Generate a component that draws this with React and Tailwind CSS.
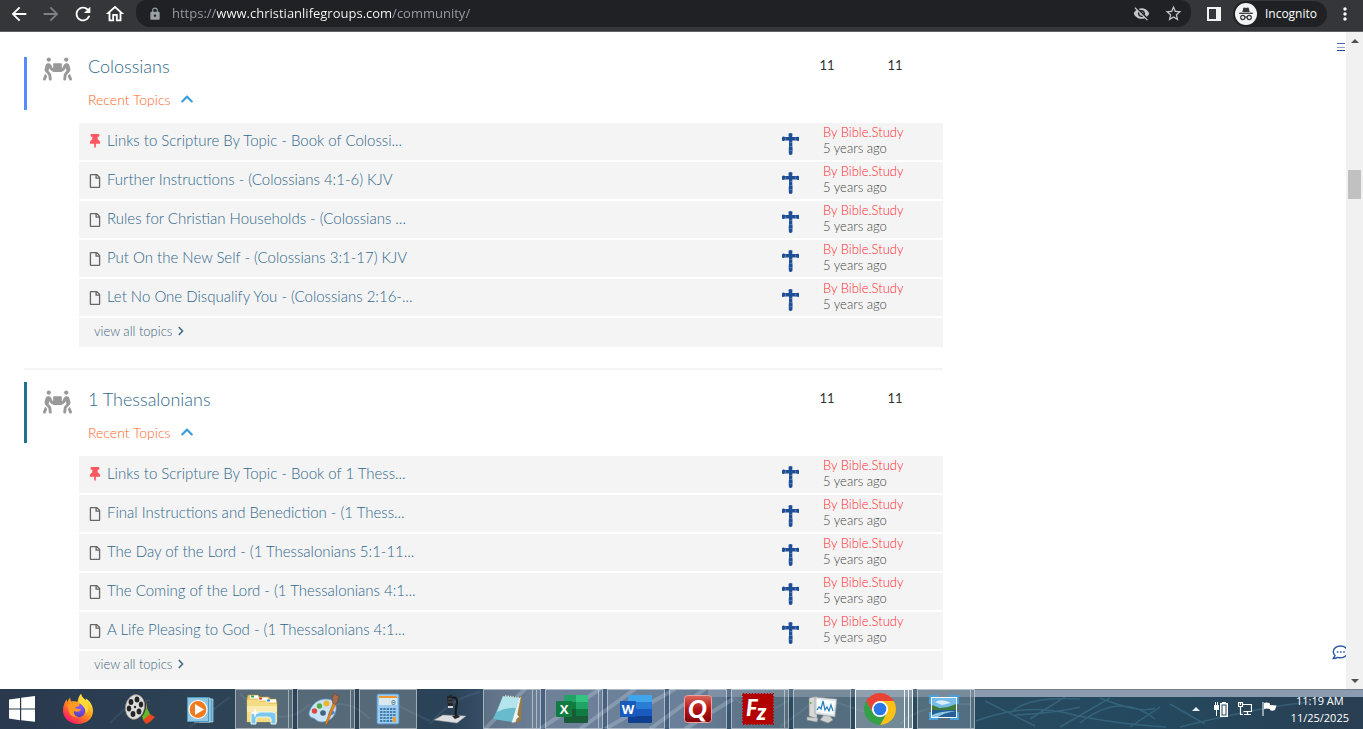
import React from "react";
import {
  FaPeopleCarry,
  FaThumbtack,
  FaRegFile,
  FaChevronUp,
  FaChevronRight,
} from "react-icons/fa";
import {
  MdArrowBack,
  MdArrowForward,
  MdRefresh,
  MdOutlineHome,
  MdLock,
  MdStarOutline,
  MdMoreVert,
  MdVisibilityOff,
} from "react-icons/md";

const forums = [
  {
    name: "Colossians",
    topics: 11,
    posts: 11,
    header: "border-[#548dff]",
    items: [
      "Links to Scripture By Topic - Book of Colossi...",
      "Further Instructions - (Colossians 4:1-6) KJV",
      "Rules for Christian Households - (Colossians ...",
      "Put On the New Self - (Colossians 3:1-17) KJV",
      "Let No One Disqualify You - (Colossians 2:16-...",
    ],
  },
  {
    name: "1 Thessalonians",
    topics: 11,
    posts: 11,
    header: "border-[#1f7291] pt-2",
    items: [
      "Links to Scripture By Topic - Book of 1 Thess...",
      "Final Instructions and Benediction - (1 Thess...",
      "The Day of the Lord - (1 Thessalonians 5:1-11...",
      "The Coming of the Lord - (1 Thessalonians 4:1...",
      "A Life Pleasing to God - (1 Thessalonians 4:1...",
    ],
  },
];

function BrowserBar() {
  return (
    <header className="flex h-8 shrink-0 items-start border-b border-[#606166] bg-[#35363a] px-2 font-['Open_Sans','Noto_Sans',sans-serif] text-white">
      <nav className="flex h-[27px] items-center gap-2.5 text-[22px]">
        <button aria-label="Back"><MdArrowBack /></button>
        <button aria-label="Forward" className="text-[#7f8083]"><MdArrowForward /></button>
        <button aria-label="Reload"><MdRefresh /></button>
        <button aria-label="Home"><MdOutlineHome /></button>
      </nav>
      <div className="ml-2.5 flex h-[27px] min-w-0 flex-1 items-center rounded-b-[14px] rounded-t-[10px] bg-[#202124] pl-3 pr-2">
        <MdLock className="size-3.5 shrink-0 text-[#9aa0a6]" />
        <input
          type="text"
          aria-label="Address"
          defaultValue="https://www.christianlifegroups.com/community/"
          className="ml-2.5 h-6 min-w-0 flex-1 bg-[linear-gradient(90deg,#9aa0a6_45px,#ffffff_45px,#ffffff_220px,#9aa0a6_220px)] bg-clip-text pb-0.5 text-[13px] text-transparent outline-none"
        />
        <button aria-label="Third-party cookies blocked" className="mr-3.5 text-[#c4c6c9]"><MdVisibilityOff className="size-[17px]" /></button>
        <button aria-label="Bookmark this page" className="text-[#c4c6c9]"><MdStarOutline className="size-[19px]" /></button>
      </div>
      <div className="flex h-[27px] items-center">
        <button aria-label="Side panel" className="ml-4">
          <svg viewBox="0 0 14 14" className="size-3.5">
            <path fill="#f1f3f4" fillRule="evenodd" d="M0 0h14v14H0zM2 2v10h7V2z" />
          </svg>
        </button>
        <button className="ml-3 flex h-[26px] items-center gap-2 rounded-full bg-[#202124] pl-0.5 pr-2.5 text-xs text-white">
          <svg viewBox="0 0 22 22" className="size-[22px]">
            <circle cx="11" cy="11" r="11" fill="#f1f3f4" />
            <path fill="#35363a" d="M7.3 9l1-4q.2-.6.8-.5l1.9.5 1.9-.5q.6-.1.8.5l1 4z" />
            <path stroke="#35363a" strokeWidth="1.3" d="M4.2 10.3h13.6" />
            <g fill="none" stroke="#35363a" strokeWidth="1.2">
              <circle cx="7.8" cy="14.5" r="2.1" />
              <circle cx="14.2" cy="14.5" r="2.1" />
              <path d="M9.9 14.2q1.1-.8 2.2 0" />
            </g>
          </svg>
          Incognito
        </button>
        <button aria-label="Menu" className="ml-2"><MdMoreVert className="size-5" /></button>
      </div>
    </header>
  );
}

function Cross() {
  return (
    <svg viewBox="0 0 17 24" className="mt-1 h-6 w-[17px]" aria-hidden="true">
      <path
        fill="#1e4f96"
        d="M6.500 1.800q2-1.600 4 0l-.3 3.200h4.300q2-.8 2.500.2v3.200q-.5 1-2.500.2h-4.200v5l.3 3-.2 5.500q-1.700 1.600-3.500.2l-.2-4.500.3-4V8.600H3q-2 .7-3-.2V5.200q1-1 3-.3h3.700z"
      />
      <path stroke="#7697c4" strokeWidth=".6" d="M3.500 5.500v2.500M13.500 5.500v2.500M7.500 10.500h2.500M7.500 14.500h2.500M7.500 18.500h2.500" />
    </svg>
  );
}

function Forum({ forum }) {
  return (
    <section>
      <div className={"flex items-start border-l-[3px] pl-4 pr-3.5 " + forum.header}>
        <FaPeopleCarry className="h-6 w-[29px] shrink-0 text-[#999999]" />
        <div className="ml-4 flex-1">
          <h2 className="text-lg/[18px] text-[#2f678c]"><a href="#forum">{forum.name}</a></h2>
          <button className="mt-[15px] flex h-5 items-center gap-2.5 pb-px text-sm/[18px] text-[#ff6426]">
            Recent Topics
            <FaChevronUp className="mb-0.5 size-3.5 text-[#3d9fdc]" />
          </button>
        </div>
        <span className="w-[68px] text-center text-[13px]/4 font-normal text-[#333333]">{forum.topics}</span>
        <span className="w-[68px] text-center text-[13px]/4 font-normal text-[#333333]">{forum.posts}</span>
      </div>
      <ul className="ml-[55px] mt-[13px] flex flex-col gap-0.5">
        {forum.items.map((title, i) => (
          <li key={title} className="flex h-[37px] items-center bg-[#f4f4f4] pl-2.5">
            {i === 0 ? (
              <FaThumbtack className="mb-0.5 mr-1.5 h-3.5 w-3 text-[#f9595f]" />
            ) : (
              <FaRegFile className="mr-1.5 h-3.5 w-3 text-[#666666]" />
            )}
            <a href="#topic" className="flex-1 pb-[3px] text-[15px]/5 text-[#2f678c]">{title}</a>
            <Cross />
            <div className="ml-6 w-[120px] pb-[3px] text-[13px]/4 text-[#444444]">
              <a href="#member" className="block text-[#ff2a30]">By Bible.Study</a>
              <span className="block">5 years ago</span>
            </div>
          </li>
        ))}
        <li className="flex h-[29px] items-center bg-[#f4f4f4] pb-[3px] pl-[15px]">
          <a href="#all" className="flex items-center gap-1 text-[13px]/4 text-[#41637a]">
            view all topics
            <FaChevronRight className="size-2.5 text-[#43708c]" />
          </a>
        </li>
      </ul>
    </section>
  );
}

function ScrollBar() {
  return (
    <div className="flex w-[17px] shrink-0 flex-col items-center bg-[#f1f1f1]">
      <button aria-label="Scroll up" className="flex h-[17px] w-full items-center justify-center">
        <svg viewBox="0 0 8 4" className="h-1 w-2"><path fill="#505050" d="M0 4l4-4 4 4z" /></svg>
      </button>
      <div className="flex w-full flex-1 flex-col items-center">
        <div className="basis-[19.5%]" />
        <div className="h-[29px] w-[13px] bg-[#c1c1c1]" />
      </div>
      <button aria-label="Scroll down" className="flex h-[17px] w-full items-center justify-center">
        <svg viewBox="0 0 8 4" className="h-1 w-2"><path fill="#505050" d="M0 0l4 4 4-4z" /></svg>
      </button>
    </div>
  );
}

const icon = "size-8";

function Windows() {
  return (
    <svg viewBox="0 0 26 26" className="size-[26px]">
      <path fill="#fff" d="M0 3.500l11-1.600v10.600H0zM12.200 1.700L26 0v12.500H12.200zM0 13.600h11v10.600L0 22.600zM12.200 13.600H26v12.200l-13.800-1.600z" />
    </svg>
  );
}

function Firefox() {
  return (
    <svg viewBox="0 0 32 32" className={icon}>
      <defs>
        <linearGradient id="ff" x1=".85" y1=".1" x2=".2" y2=".95">
          <stop offset="0" stopColor="#fff44f" />
          <stop offset=".35" stopColor="#ffae1c" />
          <stop offset=".65" stopColor="#ff6a2b" />
          <stop offset="1" stopColor="#f5156c" />
        </linearGradient>
        <radialGradient id="ffp" cx=".6" cy=".3" r=".8">
          <stop offset="0" stopColor="#9059ff" />
          <stop offset="1" stopColor="#4a3cae" />
        </radialGradient>
      </defs>
      <path fill="url(#ff)" d="M19 1c.5 3 3 4.500 4.500 6.500l.3-2C28 8 31 12.500 31 18c0 8-7 13-15 13S1 25.500 1 17.500C1 13 2.500 9 4.800 6.200L5.200 9 8 4.500 9 8.500c3-.8 5 0 6.500.5C16 5.500 17 3 19 1z" />
      <circle cx="16.500" cy="17.500" r="6.800" fill="url(#ffp)" />
      <path fill="#ff9a20" d="M5 12.500C7 9.500 10 8.300 14 9.500c1.500.4 3 1.500 4 2.500-1 1.500-4 1.500-5 3 2.500.6 3.500 1.600 6 1-1.500 3.500-5 3-7 2-.5 3 1.500 5.500 4.500 6-6 1.500-10-3-10-8z" />
      <path fill="#ffd83a" d="M19 1c.5 3 3 4.500 4.500 6.500 3.500 4 4 9 .5 13 0-6-4-8-6.500-11C16.500 6.500 17 3.500 19 1z" />
    </svg>
  );
}

function MovieMaker() {
  return (
    <svg viewBox="0 0 32 32" className={icon}>
      <path fill="#2c5fc4" d="M15 3q7 1 7 8l1 6-6 1z" />
      <path fill="#e7b715" d="M20 6q3 4 3 9l-4 1z" />
      <path fill="#65b72d" d="M17 18l6-3 4 8-8 4z" />
      <path fill="#e8481f" d="M19 27l7-6 5 3-5 5-4 2z" />
      <ellipse cx="12" cy="14" rx="10" ry="13" fill="#333" transform="rotate(12 12 14)" />
      <ellipse cx="11" cy="14" rx="9.500" ry="12.500" fill="#ddd" stroke="#888" strokeWidth=".6" transform="rotate(12 11 14)" />
      <g fill="#252525">
        <ellipse cx="13" cy="6.500" rx="2.400" ry="3" /><ellipse cx="7" cy="9" rx="2.400" ry="3" />
        <ellipse cx="5" cy="15.500" rx="2.200" ry="3" /><ellipse cx="9" cy="21" rx="2.400" ry="3" />
        <ellipse cx="15" cy="18.500" rx="2.400" ry="3" /><ellipse cx="17" cy="11.500" rx="2.200" ry="3" />
        <circle cx="11" cy="14" r="1.200" />
      </g>
    </svg>
  );
}

function MediaPlayer() {
  return (
    <svg viewBox="0 0 32 32" className={icon}>
      <path fill="#5ca5cb" stroke="#b7dded" strokeWidth=".7" d="M13 6h14v23H13z" />
      <path fill="#72b7d8" stroke="#d2edf7" strokeWidth=".7" d="M8 5h16v24H8z" />
      <path fill="#8fc7e1" stroke="#4e9ac2" d="M1.500 4.500h21v24h-21z" />
      <circle cx="12" cy="16.500" r="9" fill="#f07a1e" stroke="#fff" strokeWidth="1.200" />
      <path fill="#fff" d="M9 11l9 5.500L9 22z" />
    </svg>
  );
}

function Explorer() {
  return (
    <svg viewBox="0 0 32 32" className={icon}>
      <path fill="#e8c965" stroke="#b69135" strokeWidth=".6" d="M1 5l1-3h10l2 2h9l1 2h6l1 3v20H1z" />
      <path fill="#fff" d="M4 2.500h8v3H4zM12 4.500h10v3H12zM20 6.500h10v3H20z" />
      <path fill="#25a845" d="M5 2.500h3v2H5z" /><path fill="#d53a2c" d="M13 4.500h3v2h-3z" /><path fill="#2c8de0" d="M21 6.500h3v2h-3z" />
      <path fill="#f4dc84" d="M1 7h10l2 2h8l2 2h8v18H1z" />
      <path fill="#f9ebb0" d="M1 13h30v6H1z" />
      <path fill="#7cc8ea" stroke="#e6f7ff" d="M5 31V22q0-3 4-3h17q4 0 4 3v9h-5v-5q0-2-3-2h-9q-3 0-3 2v5z" />
      <path fill="#fff" d="M9 15l1 4 4 1-4 1-1 4-1-4-4-1 4-1z" />
    </svg>
  );
}

function Paint() {
  return (
    <svg viewBox="0 0 32 32" className={icon}>
      <path fill="#c8e3f5" stroke="#659cc5" strokeWidth=".8" d="M18 6c7 0 11 4 10 11s-7 12-14 12c-5 0-6-3-9-4-4-1-5-4-3-8C5 10 11 6 18 6z" />
      <circle cx="15" cy="20" r="2.800" fill="#42637c" />
      <circle cx="6.500" cy="18" r="2.700" fill="#e04a3e" /><circle cx="11.500" cy="13" r="2.700" fill="#52ad3c" />
      <circle cx="18.500" cy="10.500" r="3" fill="#f1b52a" />
      <path fill="#4e83d1" d="M22 17q4 0 5 3-3 3-7 2z" />
      <path fill="#e88622" stroke="#a45b12" strokeWidth=".5" d="M25 10l2.500 1.500L19 31l-2 .5z" />
      <path fill="#a56b4a" stroke="#65402c" strokeWidth=".5" d="M24.500 10q-1-6 2-10l1.500 2 3 1q0 5-3.500 8.500z" />
    </svg>
  );
}

function Calculator() {
  return (
    <svg viewBox="0 0 32 32" className={icon}>
      <rect x="5" y="1" width="22" height="30" rx="1.500" fill="#9ecbee" stroke="#4c8ec6" />
      <path fill="#ee982e" d="M7 3h18v2H7z" />
      <path fill="#d7e9ef" d="M7 5h18v7H7z" />
      <text x="19" y="12" fontSize="8" fontFamily="Liberation Mono, monospace" fill="#395976">0</text>
      {[16, 19, 22, 25, 28].map((y) => (
        <path key={y} stroke="#3f7ead" strokeWidth="2" strokeDasharray="2.400 .9" d={`M8 ${y}h16`} />
      ))}
      <path fill="#f39a28" d="M21 24h3v5h-3z" />
    </svg>
  );
}

function Microscope() {
  return (
    <svg viewBox="0 0 32 32" className={icon}>
      <path fill="#dcdedf" stroke="#999" strokeWidth=".5" d="M0 27l9-5 23 1-9 7z" />
      <path fill="none" stroke="#171819" strokeWidth="2" d="M17 5q7-2 6 5-2 9-1 14" />
      <path fill="#232527" d="M13 3l5-1 1 11-5 1zM18 23l6-1 2 2-5 2z" />
      <path fill="#d3d7da" d="M14 13h5v2h-5z" />
      <path stroke="#777" strokeWidth=".6" d="M14 6h4M14 9h5" />
    </svg>
  );
}

function Notepad() {
  return (
    <svg viewBox="0 0 32 32" className={icon}>
      <path fill="#9b7a3c" d="M28 3l2 1-1 24-6 2z" />
      <path fill="#f4f4ee" stroke="#888" strokeWidth=".5" d="M12 2l17 2-5 25-4 1z" />
      <path fill="#68bbcb" d="M11 3l16 2-7 24-19-3z" />
      <path fill="#b5e5ec" d="M11 3l16 2-3 10q-10-1-19 4z" />
      <path stroke="#5d6669" strokeWidth="1.300" strokeDasharray="1 1.500" d="M12 2.500l16 1.800" />
      <path fill="#e5f5f7" d="M20 29l5-8 2 3z" />
    </svg>
  );
}

function OfficeTile({ letter, colors, badge }) {
  return (
    <svg viewBox="0 0 32 32" className={icon}>
      <path fill={colors[0]} d="M9 2h22q1 0 1 1v6H8V3q0-1 1-1z" />
      <path fill={colors[1]} d="M8 9h24v7H8z" />
      <path fill={colors[2]} d="M8 16h24v7H8z" />
      <path fill={colors[3]} d="M8 23h24v6q0 1-1 1H9q-1 0-1-1z" />
      {letter === "X" && <path fill="#21a366" d="M8 3q0-1 1-1h11v7H8z" />}
      {letter === "X" && <path fill="#107c41" d="M8 9h12v7H8zM20 16h12v7H20z" />}
      <rect y="8" width="16" height="16" rx="1" fill={badge} />
      <text x="8" y="20.500" textAnchor="middle" fontSize="13" fontWeight="700" fontFamily="Open Sans, sans-serif" fill="#fff">{letter}</text>
    </svg>
  );
}

function Quicken() {
  return (
    <svg viewBox="0 0 32 32" className={icon}>
      <defs>
        <linearGradient id="qk" x2="0" y2="1"><stop stopColor="#da675e" /><stop offset=".5" stopColor="#b31114" /><stop offset="1" stopColor="#820509" /></linearGradient>
      </defs>
      <rect x="2.500" y="2.500" width="27" height="27" rx="3" fill="url(#qk)" stroke="#e9a4a1" />
      <text x="15.500" y="24.500" textAnchor="middle" fontSize="25" fontStyle="italic" fontWeight="900" fontFamily="Lato, sans-serif" fill="#fff">Q</text>
    </svg>
  );
}

function FileZilla() {
  return (
    <svg viewBox="0 0 32 32" className={icon}>
      <path fill="#b30000" d="M1 1h30v30H1z" />
      <path fill="none" stroke="#b30000" strokeWidth="1.500" strokeDasharray="1.500 1.500" d="M.7.700h30.600v30.600H.7z" />
      <text x="4" y="23" fontSize="22" fontStyle="italic" fontWeight="900" fontFamily="Lato, sans-serif" fill="#fff">
        F<tspan dy="4">z</tspan>
      </text>
    </svg>
  );
}

function Monitor() {
  return (
    <svg viewBox="0 0 32 32" className={icon}>
      <path fill="#d6d7d6" stroke="#7c8082" strokeWidth=".6" d="M3 5l8-2v23l-8-3z" />
      <path fill="#5bc43b" d="M4 9h1.500v2H4z" />
      <path fill="#cfd1d1" stroke="#919799" strokeWidth=".6" d="M14 27l4-5h5l4 5-5 3zM1 24l11 1-1 4-10-2z" />
      <path fill="#dfe3e3" stroke="#858b8e" strokeWidth=".6" d="M9 4l22 2-2 18-20-3z" />
      <path fill="#f8fdff" d="M11 6l18 2-1.500 13.500L11 19z" />
      <path fill="none" stroke="#267dbf" strokeWidth="1.200" d="M11 17l2-3 2 2 2-8 2 9 2-3 2 4 2-6 2 6" />
    </svg>
  );
}

function Chrome() {
  const wedge = "M24 12H44.780A24 24 0 0 0 3.220 12L13.610 30A12 12 0 0 1 24 12Z";
  return (
    <svg viewBox="0 0 48 48" className={icon}>
      <circle cx="24" cy="24" r="14" fill="#fff" />
      <path fill="#ea4335" d={wedge} />
      <path fill="#fbc116" d={wedge} transform="rotate(120 24 24)" />
      <path fill="#34a047" d={wedge} transform="rotate(240 24 24)" />
      <circle cx="24" cy="24" r="9.500" fill="#2a78e8" />
    </svg>
  );
}

function PhotoViewer() {
  return (
    <svg viewBox="0 0 32 32" className={icon}>
      <path fill="#48a0dd" d="M1 2h9v9H1zM22 2h9v9h-9zM1 19h9v8H1zM22 19h9v8h-9z" />
      <path fill="#f7fafb" d="M3 4h26v21H3z" />
      <path fill="#77bce9" d="M4 5h24v12H4z" />
      <path fill="#d9eefa" d="M7 9q7-4 16 1l-9 2z" />
      <path fill="#3f7c3b" d="M4 12l8 3 8-1 8-3v6H4z" />
      <path fill="#245f98" d="M4 17h24v7H4z" />
      <path fill="#8fc7de" d="M4 22q8-4 24-4-13 2-18 6H4z" />
    </svg>
  );
}

const green = ["#33c481", "#21a366", "#185c37", "#185c37"];
const blue = ["#41a5ee", "#2b7cd3", "#185abd", "#103f91"];

const apps = [
  { name: "Firefox", icon: <Firefox />, windows: 0 },
  { name: "Movie Maker", icon: <MovieMaker />, windows: 0 },
  { name: "Media Player", icon: <MediaPlayer />, windows: 0 },
  { name: "File Explorer", icon: <Explorer />, windows: 2 },
  { name: "Paint", icon: <Paint />, windows: 2 },
  { name: "Calculator", icon: <Calculator />, windows: 1 },
  { name: "Microscope", icon: <Microscope />, windows: 0 },
  { name: "Notepad", icon: <Notepad />, windows: 3 },
  { name: "Excel", icon: <OfficeTile letter="X" colors={green} badge="#107c41" />, windows: 2 },
  { name: "Word", icon: <OfficeTile letter="W" colors={blue} badge="#185abd" />, windows: 1 },
  { name: "Quicken", icon: <Quicken />, windows: 1 },
  { name: "FileZilla", icon: <FileZilla />, windows: 2 },
  { name: "Resource Monitor", icon: <Monitor />, windows: 1 },
  { name: "Chrome", icon: <Chrome />, windows: 3, active: true },
  { name: "Photo Viewer", icon: <PhotoViewer />, windows: 2 },
];

function AppButton({ app }) {
  const tone = app.active ? "border-white/90 bg-white/35" : "border-white/45 bg-white/20";
  return (
    <button aria-label={app.name} className="flex h-10 w-[58px] shrink-0">
      <span className={"flex h-10 flex-1 items-center justify-center " + (app.windows ? "border " + tone : "")}>
        {app.icon}
      </span>
      {app.windows > 1 && <span className={"h-10 w-1 border-y border-r " + tone} />}
      {app.windows > 2 && <span className={"h-10 w-1 border-y border-r " + tone} />}
    </button>
  );
}

function TaskBar() {
  return (
    <footer className="relative flex h-10 shrink-0 items-center overflow-hidden bg-[#2b3e50] font-['Open_Sans','Noto_Sans',sans-serif] text-white">
      <svg viewBox="0 0 1363 40" preserveAspectRatio="none" className="absolute inset-0 size-full" aria-hidden="true">
        <defs>
          <linearGradient id="desk">
            <stop stopColor="#2a394d" /><stop offset=".2" stopColor="#2d4557" />
            <stop offset=".33" stopColor="#2b4358" /><stop offset=".4" stopColor="#4a6280" />
            <stop offset=".5" stopColor="#456080" /><stop offset=".57" stopColor="#2b4a60" />
            <stop offset=".85" stopColor="#24495e" /><stop offset="1" stopColor="#2a3e52" />
          </linearGradient>
        </defs>
        <path fill="url(#desk)" d="M0 0h1363v40H0z" />
        <g fill="none" stroke="#7fa3bd" strokeOpacity=".14" strokeWidth="2">
          <path d="M110 34l18-17 22-6M190 38l40-30M240 5q40 40 70 10M310 30q30-30 60 0M380 8l50 24M430 35q20-25 50-32" />
          <path d="M730 5q30 30 60 5M780 38l40-30 60 20M900 35q20-20 70-20" />
        </g>
        <g fill="none" stroke="#c2d3e4" strokeOpacity=".28" strokeWidth="4">
          <path d="M485 40l40-40M540 40l60-40M580 40l55-40M605 40l70-40M650 40l55-40M685 40l48-30" />
        </g>
        <g fill="none" stroke="#4f93ae" strokeOpacity=".35" strokeWidth="1.500">
          <path d="M1010 24q18-17 70-14M1015 26q40-2 65-8M1060 38l50-29M1030 30l35-22M1080 34q40-32 75-4M1130 38l30-20M1100 9q40 16 55 10M976 32q50-18 90-8t100 14M1180 38q80-20 130-25M1170 15l35 20M985 12l50 25" />
        </g>
        <path fill="#8b9bb0" fillOpacity=".45" d="M708 0h267v8H708z" />
        <path fill="#8b9bb0" d="M975 0h388v8H975z" />
        <path fill="#77808c" d="M975 0h388v1H975z" />
      </svg>
      <button aria-label="Start" className="relative flex w-[49px] shrink-0 justify-start pl-[9px]"><Windows /></button>
      <nav className="relative flex min-w-0 gap-1">
        {apps.map((app) => <AppButton key={app.name} app={app} />)}
      </nav>
      <div className="relative ml-auto flex shrink-0 items-center pr-3.5">
        <button aria-label="Show hidden icons" className="mr-3.5">
          <svg viewBox="0 0 8 4" className="h-1 w-2"><path fill="#e8edf2" d="M0 4l4-4 4 4z" /></svg>
        </button>
        <div className="flex items-center gap-2.5">
          <svg viewBox="0 0 14 16" className="h-4 w-3.5">
            <path fill="#fff" fillRule="evenodd" d="M1 1h1v3h1V1h1v3h1v5H3v6H2V9H0V4h1zM8 1h4v1h2v14H6V2h2zM7.500 3.500v11h5v-11z" />
            <path fill="#fff" d="M8.500 4.500h3v9h-3z" />
          </svg>
          <svg viewBox="0 0 14 14" className="size-3.5" fill="none" stroke="#fff">
            <path d="M5 2.500h8.500v7H5.500M9.500 10v2.500M6 12.500h7M2.500 5v7.500H5M.5.5h4v4h-4zM2.500 1v2" strokeWidth="1.200" />
          </svg>
          <svg viewBox="0 0 15 14" className="h-3.5 w-[15px]">
            <path fill="#fff" d="M.5 0h1v14h-1zM2 1q3-1 6 .5V3l6.500.5L13 8q-3 1.500-5 0V7Q5 6 2 7z" />
          </svg>
        </div>
        <time className="ml-3.5 flex flex-col items-center text-[11px]/[17px] text-white">
          <span>11:19 AM</span>
          <span>11/25/2025</span>
        </time>
      </div>
    </footer>
  );
}

export default function App() {
  return (
    <div className="flex min-h-screen flex-col bg-white">
      <BrowserBar />
      <div className="flex flex-1">
        <main className="flex-1 pl-6 pr-3 pt-[25px] font-['Lato',sans-serif] font-light">
          <div className="max-w-[919px]">
            <Forum forum={forums[0]} />
            <hr className="mb-3 mt-[21px] border-t-2 border-[#f4f4f4]" />
            <Forum forum={forums[1]} />
          </div>
        </main>
        <aside className="flex w-3.5 shrink-0 flex-col items-end justify-between overflow-hidden pb-[29px] pt-[11px]">
          <button aria-label="Open menu" className="pr-px">
            <svg viewBox="0 0 8 9" className="h-[9px] w-2">
              <path fill="#4470b0" d="M0 0h8v1H0z" /><path fill="#8aa6d0" d="M0 4h8v1H0z" /><path fill="#1e4f9c" d="M0 7h8v1H0z" />
            </svg>
          </button>
          <button aria-label="Open chat" className="self-start">
            <svg viewBox="0 0 16 15" className="h-[15px] w-4" fill="none" stroke="#2a58a0" strokeWidth="1.400">
              <path d="M8.500 1C4.500 1 1.300 3.400 1.300 6.700c0 1.600.7 2.800 1.700 3.800L1.200 13.600c2 .1 3.400-.6 4.300-1.200 4.500 1.200 10-1 10-5.700C15.500 3.400 12.500 1 8.500 1z" />
              <path strokeWidth="1.600" strokeDasharray="1.600 1.600" d="M4.800 7h8" />
            </svg>
          </button>
        </aside>
        <ScrollBar />
      </div>
      <TaskBar />
    </div>
  );
}
